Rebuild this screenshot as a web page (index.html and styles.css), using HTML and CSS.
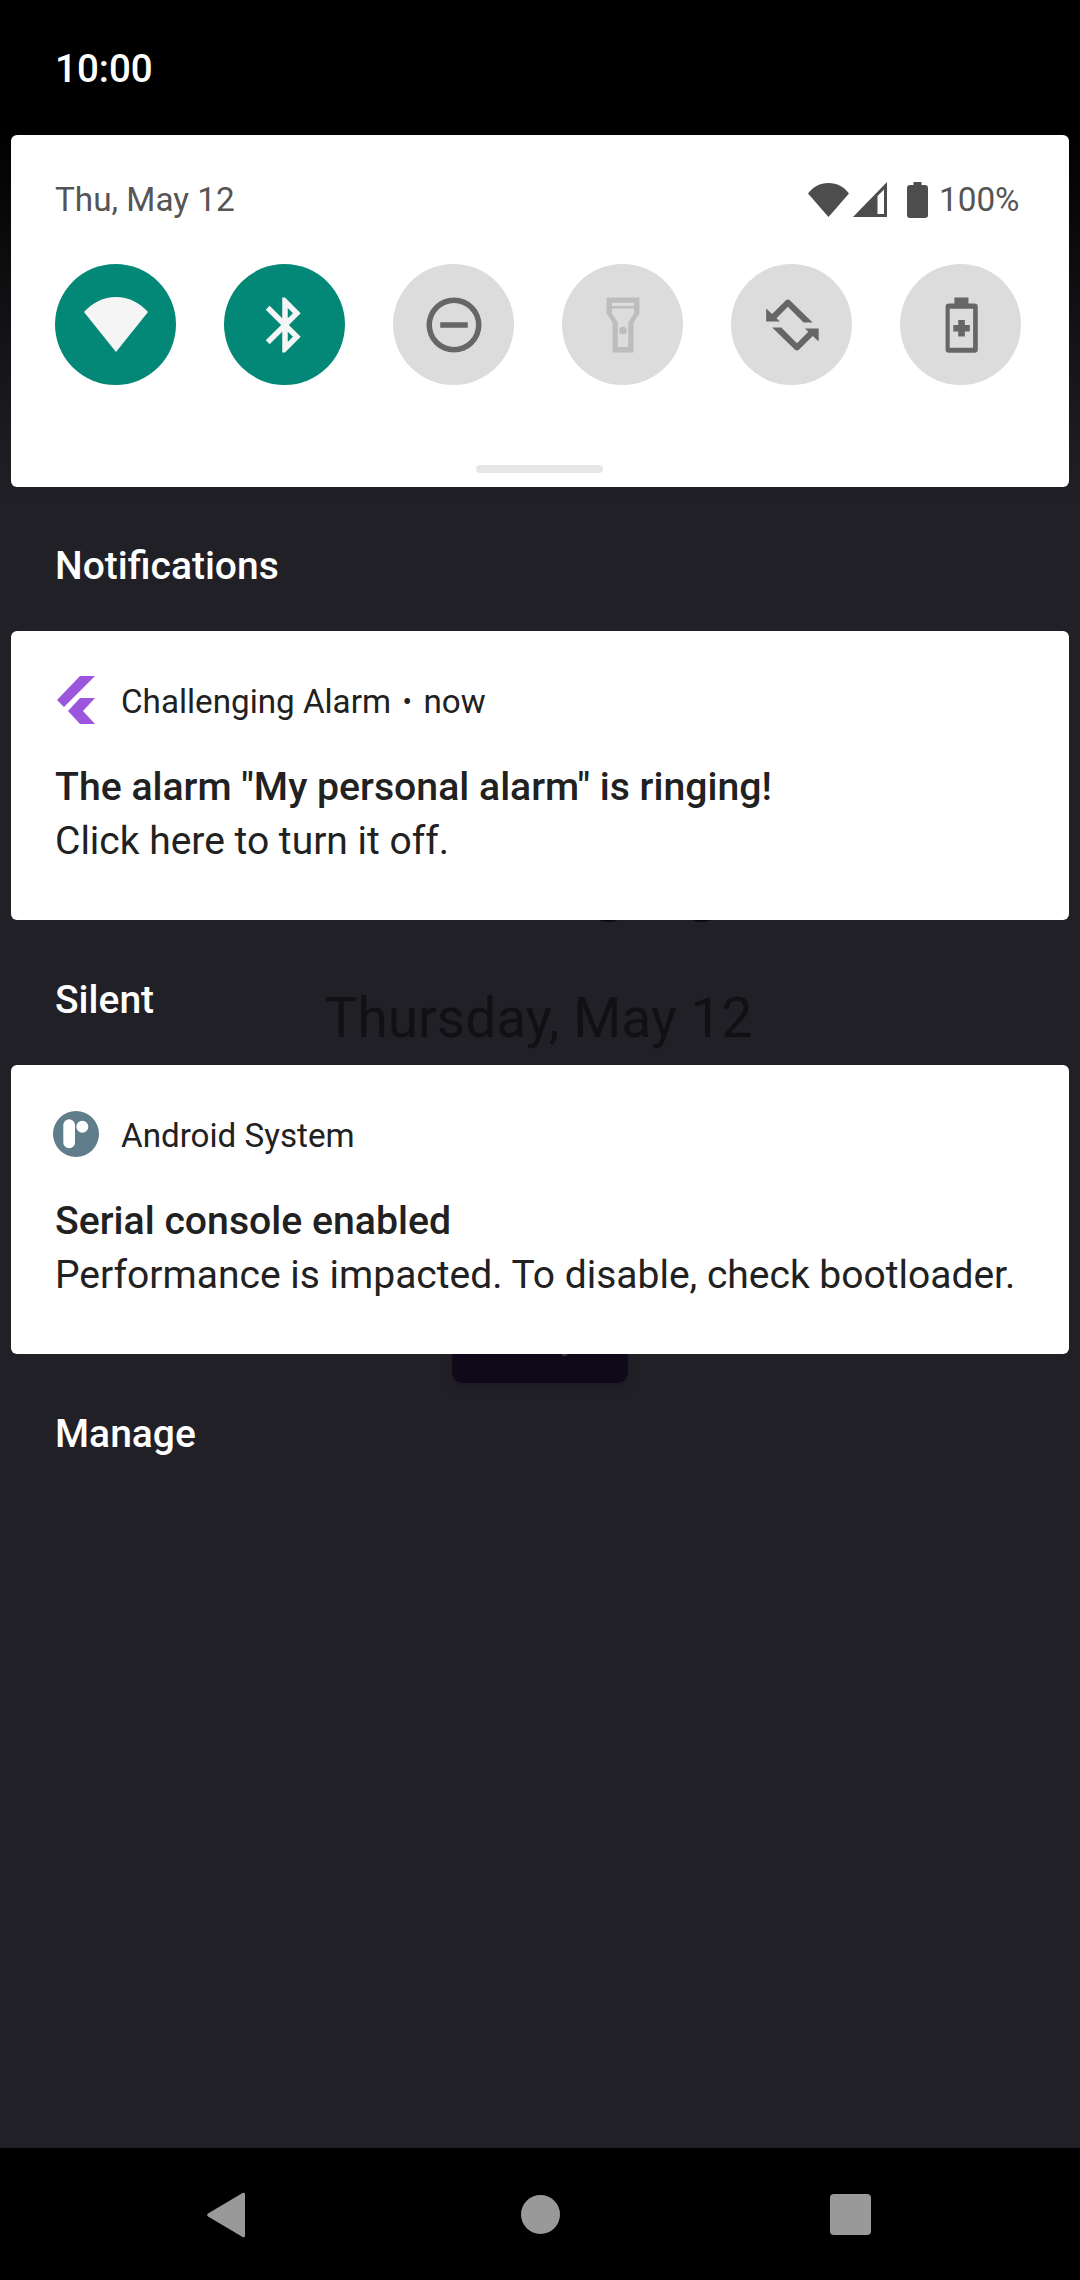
FILE: index.html
```html
<!DOCTYPE html>
<html lang="en">
<head>
  <meta charset="UTF-8">
  <title>Notification shade</title>
  <link rel="stylesheet" href="styles.css">
</head>
<body>
  <div class="screen">
    <div class="behind">
      <span class="behind-arc arc-a"></span>
      <span class="behind-arc arc-b"></span>
      <div class="behind-date">Thursday, May 12</div>
      <div class="behind-button"></div>
    </div>

    <div class="statusbar">10:00</div>

    <main class="shade">
      <section class="qs">
        <div class="qs-header">
          <span class="qs-date">Thu, May 12</span>
          <div class="qs-status">
            <svg class="st-wifi" viewBox="0 0 41 34"><path d="M0 10.5C5 4 12 0 20.5 0S36 4 41 10.5L20.5 34z"/></svg>
            <svg class="st-signal" viewBox="0 0 34 35"><path fill-rule="evenodd" d="M34 0V35H0zM31 7.5L24.5 14V32H31z"/></svg>
            <svg class="st-battery" viewBox="0 0 21 36"><path d="M6.5 0h8v3H18a3 3 0 0 1 3 3v27a3 3 0 0 1-3 3H3a3 3 0 0 1-3-3V6a3 3 0 0 1 3-3h3.5z"/></svg>
            <span class="qs-batt">100%</span>
          </div>
        </div>
        <div class="tiles">
          <div class="tile on">
            <svg viewBox="0 0 24 24"><path d="M.36 7.3C3.4 3.9 7.5 1.8 12 1.8s8.600 2.100 11.640 5.500L12 21.800z"/></svg>
          </div>
          <div class="tile on">
            <svg viewBox="0 0 24 24"><path d="M17.710 7.710L12 2h-1v7.590L6.410 5 5 6.410 10.590 12 5 17.590 6.410 19 11 14.410V22h1l5.710-5.710-4.300-4.290 4.300-4.290zM13 5.830l1.880 1.880L13 9.590V5.830zm1.880 10.460L13 18.170v-3.760l1.880 1.880z"/></svg>
          </div>
          <div class="tile">
            <svg viewBox="0 0 24 24"><path fill-rule="evenodd" d="M12 2a10 10 0 1 0 0 20 10 10 0 0 0 0-20zm0 2a8 8 0 1 1 0 16 8 8 0 0 1 0-16zM7 11h10v2H7z"/></svg>
          </div>
          <div class="tile dim">
            <svg viewBox="0 0 24 24"><path fill-rule="evenodd" d="M6 2h12v5.800l-2.200 3.300V22H8.200V11.100L6 7.800zM8 3.900v1.200h8V3.900zM8 6v1.800l2.100 3.300V20h3.800v-8.900L16 7.800V6zM12 12.600a1.400 1.400 0 1 0 0 2.800 1.400 1.400 0 0 0 0-2.800z"/></svg>
          </div>
          <div class="tile">
            <svg viewBox="0 0 24 24"><path d="M2.600 6L4.760 8.030 9.800 3Q10.500 2.400 11.200 3L19.500 11.100H16.200L10.500 5.400 6.360 9.540 7.600 10.700H2.600zM21.700 18L19.540 15.970 14.500 21Q13.800 21.600 13.100 21L4.800 12.900H8.100L13.800 18.600 17.940 14.460 16.700 13.300H21.700z"/></svg>
          </div>
          <div class="tile">
            <svg viewBox="0 0 24 24"><path fill-rule="evenodd" d="M9.600 2h5.100v2.200h2.200a1.200 1.200 0 0 1 1.200 1.200v15.500a1.200 1.200 0 0 1-1.200 1.200H7.600a1.200 1.200 0 0 1-1.200-1.200V5.400a1.200 1.200 0 0 1 1.200-1.200h2zM7.900 6.100v14.200h8.500V6.100zM11 10.200h2.400V12h1.800v2.400h-1.800v1.800H11v-1.800H9.200V12H11z"/></svg>
          </div>
        </div>
        <div class="qs-handle"></div>
      </section>

      <h2 class="section-label label-first">Notifications</h2>

      <article class="notif">
        <div class="notif-head">
          <svg class="app-icon flutter" viewBox="0 0 38 48"><path d="M23 0H38L7 31 0 24zM23 22H38L26 35 38 48H23L11 35z"/></svg>
          <span class="app-name">Challenging Alarm</span>
          <span class="app-dot">•</span>
          <span class="app-name">now</span>
        </div>
        <div class="notif-title">The alarm "My personal alarm" is ringing!</div>
        <div class="notif-body">Click here to turn it off.</div>
      </article>

      <h2 class="section-label">Silent</h2>

      <article class="notif">
        <div class="notif-head">
          <svg class="app-icon system" viewBox="0 0 46 46">
            <circle cx="23" cy="23" r="23" fill="#607d8b"/>
            <rect x="10.300" y="8.300" width="11.700" height="29" rx="5.850" fill="#fff"/>
            <circle cx="29.300" cy="15.700" r="6" fill="#fff"/>
          </svg>
          <span class="app-name">Android System</span>
        </div>
        <div class="notif-title">Serial console enabled</div>
        <div class="notif-body">Performance is impacted. To disable, check bootloader.</div>
      </article>

      <h2 class="section-label">Manage</h2>
    </main>

    <nav class="navbar">
      <svg class="nav-back" viewBox="0 0 38 46"><path d="M36 .8L1 21.500a2 2 0 0 0 0 3L36 45.200a1.500 1.500 0 0 0 2-1.200V2a1.500 1.500 0 0 0-2-1.200z"/></svg>
      <span class="nav-home"></span>
      <span class="nav-recent"></span>
    </nav>
  </div>
</body>
</html>
```

FILE: styles.css
```css
* {
  box-sizing: border-box;
}
body {
  margin: 0;
  font-family: Roboto, "Noto Sans", sans-serif;
}
.screen {
  position: relative;
  width: 1080px;
  height: 2280px;
  display: flex;
  flex-direction: column;
  overflow: hidden;
  background: linear-gradient(#000 0, #000 120px, #222027 500px);
}

/* lock screen left showing through the shade */
.behind {
  position: absolute;
  left: 0;
  top: 0;
  width: 100%;
}
.behind-arc {
  position: absolute;
  top: 913px;
  height: 9px;
  border-radius: 50%;
  background: #0b0a0d;
}
.arc-a {
  left: 598px;
  width: 21px;
}
.arc-b {
  left: 691px;
  width: 22px;
}
.behind-date {
  position: absolute;
  top: 985px;
  width: 100%;
  padding-right: 3px;
  text-align: center;
  font-size: 55px;
  line-height: 66px;
  color: #111114;
}
.behind-button {
  position: absolute;
  left: 452px;
  top: 1300px;
  width: 176px;
  height: 83px;
  border-radius: 10px;
  background: #10091a;
  box-shadow: 0 4px 10px rgba(0,0,0,0.15);
}
.behind-button::after {
  content: "";
  position: absolute;
  left: 110px;
  top: 54px;
  width: 5px;
  height: 2px;
  background: #333;
}

.statusbar {
  position: relative;
  height: 135px;
  padding: 48px 0 0 55px;
  color: #fff;
  font-size: 38.500px;
  font-weight: 500;
  line-height: 42px;
}

.shade {
  position: relative;
  flex: 1;
  padding: 0 11px;
}

.qs {
  height: 352px;
  background: #fff;
  border-radius: 6px;
  padding: 0 48px 0 44px;
  display: flex;
  flex-direction: column;
}
.qs-header {
  display: flex;
  justify-content: space-between;
  align-items: center;
  height: 129px;
  color: #555;
  font-size: 33.300px;
}
.qs-status {
  display: flex;
  align-items: center;
  margin-right: 1.500px;
}
.qs-status svg {
  fill: #4d4d4d;
  display: block;
}
.st-wifi {
  width: 41px;
  height: 34px;
}
.st-signal {
  width: 34px;
  height: 35px;
  margin-left: 4px;
}
.st-battery {
  width: 21px;
  height: 36px;
  margin-left: 20px;
}
.qs-batt {
  margin-left: 11px;
}
.tiles {
  display: flex;
  justify-content: space-between;
}
.tile {
  width: 121px;
  height: 121px;
  border-radius: 50%;
  background: #dcdcdc;
  display: flex;
  align-items: center;
  justify-content: center;
}
.tile svg {
  width: 66px;
  height: 66px;
  fill: #666;
}
.tile.on {
  background: #038877;
}
.tile.on svg {
  fill: #f5f5f5;
}
.tile.dim svg {
  fill: #bdbdbd;
}
.qs-handle {
  width: 127px;
  height: 8px;
  border-radius: 4px;
  background: #e6e6e6;
  margin: 80px 0 0 421px;
}

.section-label {
  margin: 0;
  height: 145px;
  padding: 56px 0 0 44px;
  color: #fff;
  font-size: 39px;
  font-weight: 500;
  line-height: 48px;
}
.label-first {
  height: 144px;
  padding-top: 55px;
}

.notif {
  height: 289px;
  background: #fff;
  border-radius: 6px;
  padding: 0 44px;
  color: #212121;
}
.notif-head {
  display: flex;
  align-items: center;
  height: 141px;
  font-size: 33.200px;
}
.app-icon {
  width: 38px;
  height: 48px;
  flex: none;
  margin: 0 26px 3px 2px;
}
.flutter {
  fill: #9c55dd;
}
.app-icon.system {
  width: 46px;
  height: 46px;
  margin: 0 22px 3px -2px;
}
.app-dot {
  font-size: 28px;
  margin: 0 11.500px;
}
.notif-title {
  font-size: 39.200px;
  font-weight: 500;
  line-height: 54px;
  margin-top: -12px;
}
.notif-body {
  font-size: 39px;
  line-height: 54px;
}

.navbar {
  position: relative;
  height: 132px;
  background: #000;
}
.nav-back {
  position: absolute;
  left: 207px;
  top: 44px;
  width: 38px;
  height: 46px;
  fill: #999;
}
.nav-home {
  position: absolute;
  left: 521px;
  top: 47px;
  width: 39px;
  height: 39px;
  border-radius: 50%;
  background: #999;
}
.nav-recent {
  position: absolute;
  left: 830px;
  top: 46px;
  width: 41px;
  height: 41px;
  border-radius: 4px;
  background: #999;
}
```
